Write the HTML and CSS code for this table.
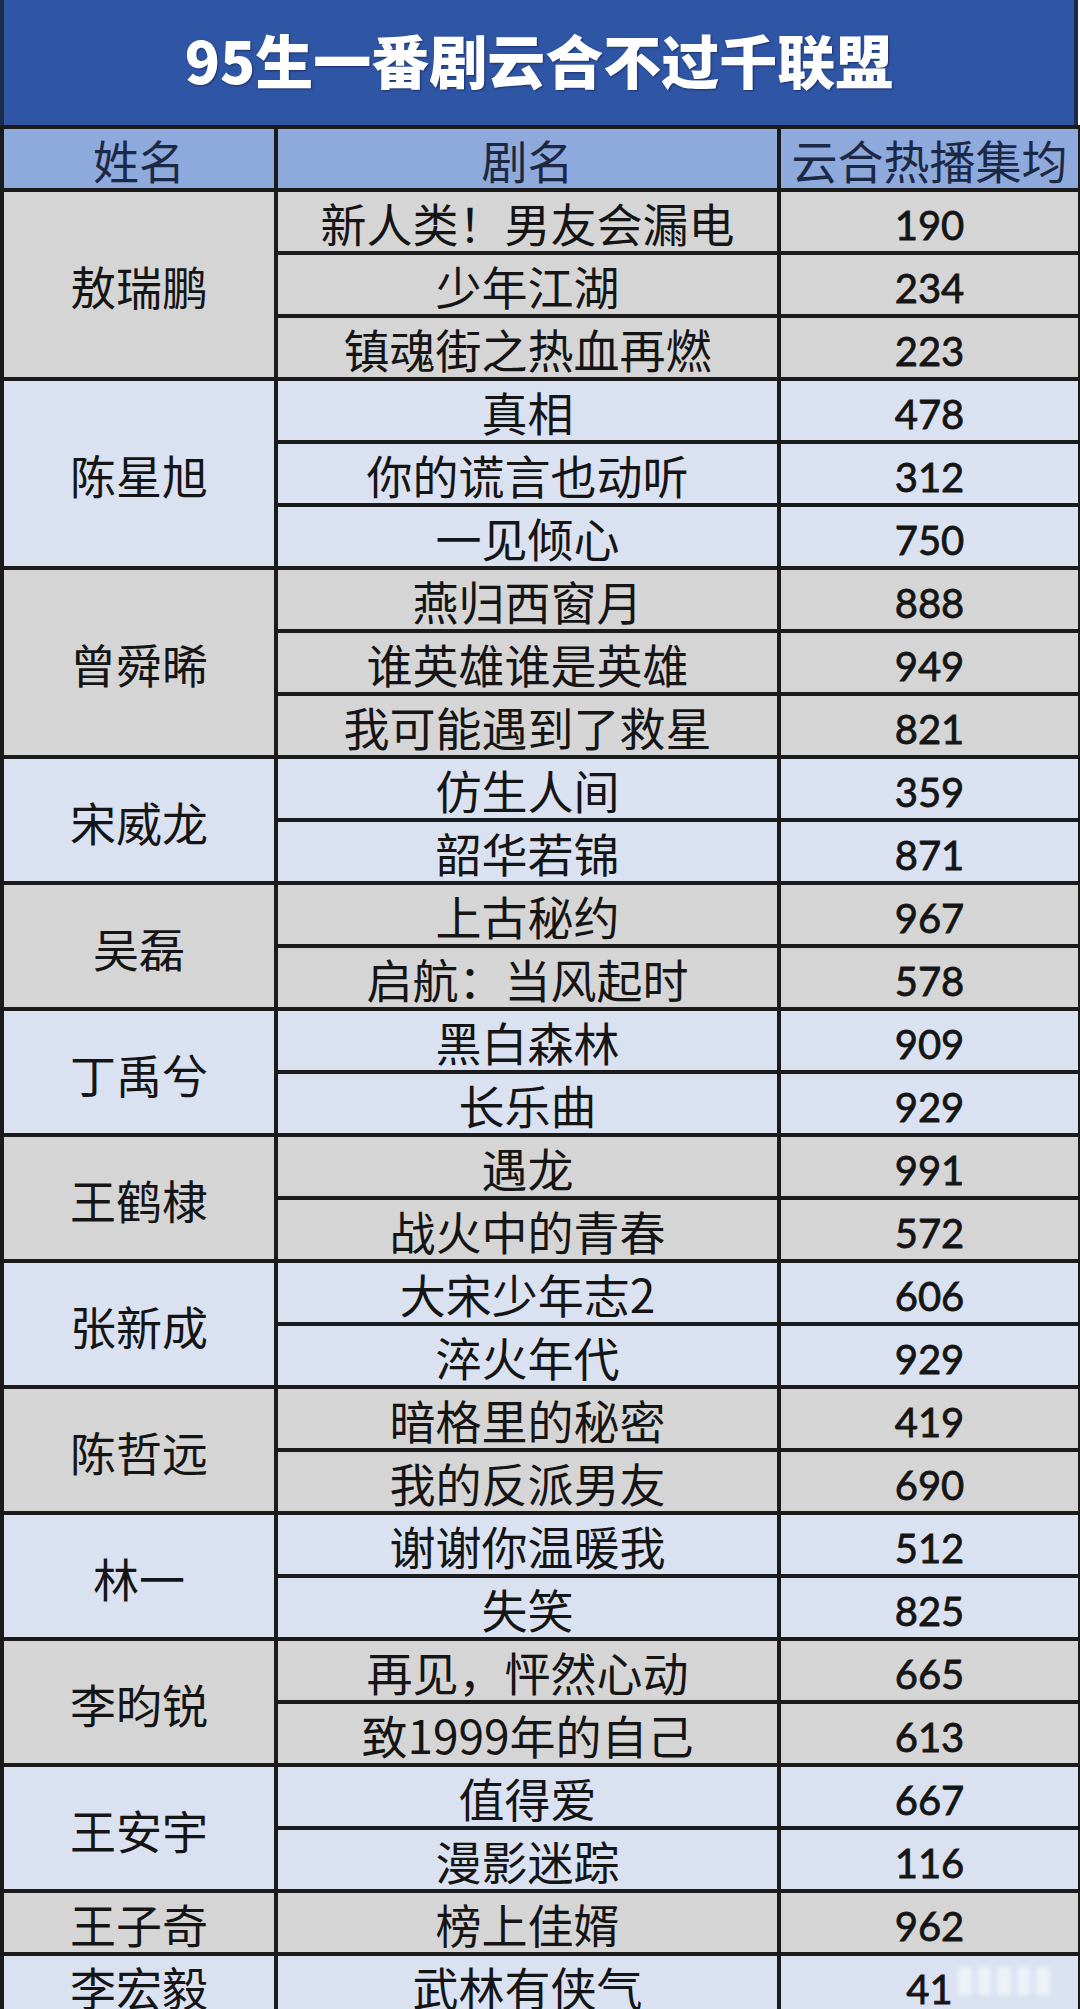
FILE: index.html
```html
<!DOCTYPE html>
<html lang="zh-CN">
<head>
<meta charset="utf-8">
<title>95生一番剧云合不过千联盟</title>
<link rel="stylesheet" href="styles.css">
</head>
<body>
<div class="sheet">
  <div class="title">95生一番剧云合不过千联盟</div>
  <table class="grid">
    <colgroup>
      <col class="c-name">
      <col class="c-drama">
      <col class="c-num">
    </colgroup>
    <thead>
      <tr><th>姓名</th><th>剧名</th><th>云合热播集均</th></tr>
    </thead>
    <tbody class="gray">
      <tr><td class="name" rowspan="3">敖瑞鹏</td><td>新人类！男友会漏电</td><td class="num">190</td></tr>
      <tr><td>少年江湖</td><td class="num">234</td></tr>
      <tr><td>镇魂街之热血再燃</td><td class="num">223</td></tr>
    </tbody>
    <tbody class="blue">
      <tr><td class="name" rowspan="3">陈星旭</td><td>真相</td><td class="num">478</td></tr>
      <tr><td>你的谎言也动听</td><td class="num">312</td></tr>
      <tr><td>一见倾心</td><td class="num">750</td></tr>
    </tbody>
    <tbody class="gray">
      <tr><td class="name" rowspan="3">曾舜晞</td><td>燕归西窗月</td><td class="num">888</td></tr>
      <tr><td>谁英雄谁是英雄</td><td class="num">949</td></tr>
      <tr><td>我可能遇到了救星</td><td class="num">821</td></tr>
    </tbody>
    <tbody class="blue">
      <tr><td class="name" rowspan="2">宋威龙</td><td>仿生人间</td><td class="num">359</td></tr>
      <tr><td>韶华若锦</td><td class="num">871</td></tr>
    </tbody>
    <tbody class="gray">
      <tr><td class="name" rowspan="2">吴磊</td><td>上古秘约</td><td class="num">967</td></tr>
      <tr><td>启航：当风起时</td><td class="num">578</td></tr>
    </tbody>
    <tbody class="blue">
      <tr><td class="name" rowspan="2">丁禹兮</td><td>黑白森林</td><td class="num">909</td></tr>
      <tr><td>长乐曲</td><td class="num">929</td></tr>
    </tbody>
    <tbody class="gray">
      <tr><td class="name" rowspan="2">王鹤棣</td><td>遇龙</td><td class="num">991</td></tr>
      <tr><td>战火中的青春</td><td class="num">572</td></tr>
    </tbody>
    <tbody class="blue">
      <tr><td class="name" rowspan="2">张新成</td><td>大宋少年志2</td><td class="num">606</td></tr>
      <tr><td>淬火年代</td><td class="num">929</td></tr>
    </tbody>
    <tbody class="gray">
      <tr><td class="name" rowspan="2">陈哲远</td><td>暗格里的秘密</td><td class="num">419</td></tr>
      <tr><td>我的反派男友</td><td class="num">690</td></tr>
    </tbody>
    <tbody class="blue">
      <tr><td class="name" rowspan="2">林一</td><td>谢谢你温暖我</td><td class="num">512</td></tr>
      <tr><td>失笑</td><td class="num">825</td></tr>
    </tbody>
    <tbody class="gray">
      <tr><td class="name" rowspan="2">李昀锐</td><td>再见，怦然心动</td><td class="num">665</td></tr>
      <tr><td>致1999年的自己</td><td class="num">613</td></tr>
    </tbody>
    <tbody class="blue">
      <tr><td class="name" rowspan="2">王安宇</td><td>值得爱</td><td class="num">667</td></tr>
      <tr><td>漫影迷踪</td><td class="num">116</td></tr>
    </tbody>
    <tbody class="gray">
      <tr><td class="name">王子奇</td><td>榜上佳婿</td><td class="num">962</td></tr>
    </tbody>
    <tbody class="blue">
      <tr><td class="name">李宏毅</td><td>武林有侠气</td><td class="num">41</td></tr>
    </tbody>
  </table>
  <div class="watermark"><span></span><span></span><span></span><span></span><span></span></div>
</div>
</body>
</html>
```

FILE: styles.css
```css
html, body {
  margin: 0;
  padding: 0;
  background: #ffffff;
}

body {
  width: 1080px;
  height: 2009px;
  overflow: hidden;
  font-family: "Noto Sans CJK SC", "Noto Sans", sans-serif;
}

.sheet {
  position: relative;
  width: 1078px;
}

.title {
  height: 125px;
  box-sizing: border-box;
  background: #2f55a5;
  border-left: 4px solid #1c2a4a;
  border-right: 4px solid #1c2a4a;
  color: #ffffff;
  font-size: 58px;
  font-weight: 900;
  line-height: 118px;
  text-align: center;
  text-shadow: 1px 1px 2px rgba(10, 20, 60, 0.55);
}

.grid {
  width: 1078px;
  border-collapse: collapse;
  table-layout: fixed;
}

.c-name { width: 274px; }
.c-drama { width: 503px; }
.c-num { width: 301px; }

.grid th,
.grid td {
  border: 4px solid #1b1b1b;
  padding: 0;
  text-align: center;
  vertical-align: middle;
  color: #151515;
  font-size: 46px;
  font-weight: 400;
  line-height: 55px;
  white-space: nowrap;
}

.grid tr {
  height: 63px;
}

.grid th {
  background: #8eaadc;
  color: #1d2944;
  padding-top: 1px;
}

.grid td {
  padding-top: 2px;
}

.grid .num {
  font-family: Lato, "Liberation Sans", sans-serif;
  font-size: 40px;
  font-weight: 400;
  -webkit-text-stroke: 0.8px #151515;
  line-height: 49px;
  padding-top: 8px;
}

.gray td { background: #d6d5d5; }
.blue td { background: #dae2f2; }

.watermark {
  position: absolute;
  left: 958px;
  top: 1964px;
  width: 92px;
  height: 34px;
  display: flex;
  gap: 6px;
  align-items: center;
  filter: blur(2px);
  opacity: 0.75;
}

.watermark span {
  flex: 1;
  height: 28px;
  border-radius: 3px;
  background: #f4f6fb;
}
```
